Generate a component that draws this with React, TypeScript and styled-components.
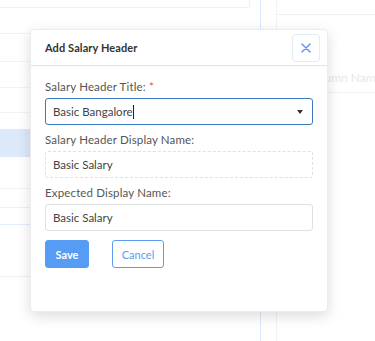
import React from "react";
import styled, { createGlobalStyle } from "styled-components";

const Global = createGlobalStyle`
  html, body { margin: 0; padding: 0; background: #fff; }
  body { font-family: Lato, "Open Sans", sans-serif; }
  * { box-sizing: border-box; }
`;

const Page = styled.div`
  position: relative;
  width: 375px;
  height: 341px;
  overflow: hidden;
  display: flex;
  background: #fff;
`;

const LeftCol = styled.div`
  width: 250px;
  flex-shrink: 0;
  display: flex;
  flex-direction: column;
`;

const CardEnd = styled.div`
  height: 8px;
  border-bottom: 1px solid #f0f0f0;
  border-right: 1px solid #f0f0f0;
  border-bottom-right-radius: 4px;
`;

const BgRow = styled.div<{ h: number }>`
  height: ${(p) => p.h}px;
  border-bottom: 1px solid #f3f3f3;
  display: flex;
  align-items: center;
  justify-content: flex-end;
  font-size: 12px;
  color: #e6e6e6;
  padding-right: 4px;
  font-family: Lato, sans-serif;
`;

const BlueBlock = styled.div`
  height: 28px;
  margin-top: 16px;
  margin-bottom: 6px;
  background: #dce9fb;
  color: #fff;
  display: flex;
  align-items: center;
  justify-content: flex-end;
  font-size: 12px;
  padding-right: 2px;
`;

const BgBox = styled.div`
  margin-top: 18px;
  height: 70px;
  border: 1px solid #f0f0f0;
  border-left: none;
  border-radius: 0 4px 4px 0;
  display: flex;
  flex-direction: column;
`;

const BgBoxRow = styled.div`
  height: 17px;
  border-bottom: 1px solid #e3edfb;
`;

const BgCaret = styled.div`
  margin-left: auto;
  margin-right: 8px;
  margin-top: 36px;
  width: 0;
  height: 0;
  border-left: 4px solid transparent;
  border-right: 4px solid transparent;
  border-top: 4px solid #e2e2e2;
`;

const Gutter = styled.div`
  width: 26px;
  flex-shrink: 0;
  display: flex;
  padding-left: 10px;
`;

const VLine = styled.div<{ c: string }>`
  width: 1px;
  height: 100%;
  background: ${(p) => p.c};
`;

const RightCol = styled.div`
  flex: 1;
  min-width: 0;
  overflow: hidden;
  display: flex;
  flex-direction: column;
  border-left: 1px solid #f3f3f3;
`;

const RightLine = styled.div`
  height: 15px;
  border-bottom: 1px solid #efefef;
`;

const RightInput = styled.div`
  margin-top: 48px;
  height: 30px;
  border-bottom: 1px solid #f3f3f3;
  display: flex;
  align-items: center;
  padding-left: 30px;
  font-size: 12px;
  color: #e8e8e8;
  white-space: nowrap;
`;

const Modal = styled.div`
  position: absolute;
  left: 30px;
  top: 29px;
  width: 298px;
  height: 283px;
  background: #fff;
  border-radius: 4px;
  border: 1px solid #ececec;
  box-shadow: 0 4px 14px rgba(0, 0, 0, 0.14);
  display: flex;
  flex-direction: column;
`;

const Header = styled.div`
  height: 36px;
  border-bottom: 1px solid #e3e3e3;
  display: flex;
  align-items: center;
  justify-content: space-between;
  padding: 0 7px 0 14px;
`;

const Title = styled.h1`
  margin: 0;
  font-size: 11px;
  font-weight: 700;
  color: #333;
  letter-spacing: 0.1px;
`;

const CloseBtn = styled.button`
  width: 28px;
  height: 28px;
  border: 1px solid #e4ebf4;
  border-radius: 4px;
  background: #fff;
  display: flex;
  align-items: center;
  justify-content: center;
  padding: 0;
  margin-top: 1px;
`;

const Body = styled.div`
  padding: 14px 14px 0 14px;
  display: flex;
  flex-direction: column;
`;

const Label = styled.label`
  font-size: 11.5px;
  color: #555;
  line-height: 14px;
  margin-bottom: 4px;
  letter-spacing: 0.15px;
`;

const Req = styled.span`
  color: #e5534b;
`;

const Field = styled.div<{ variant?: "focus" | "dashed" | "plain" }>`
  height: 27px;
  border-radius: 3px;
  border: 1px ${(p) => (p.variant === "dashed" ? "dashed" : "solid")}
    ${(p) => (p.variant === "focus" ? "#3b78bf" : "#e0e0e0")};
  display: flex;
  align-items: center;
  padding: 0 7px;
  font-size: 11.5px;
  color: #444;
  margin-bottom: 8px;
`;

const Cursor = styled.span`
  display: inline-block;
  width: 1px;
  height: 14px;
  background: #222;
  vertical-align: middle;
`;

const Caret = styled.div`
  margin-left: auto;
  margin-right: 2px;
  width: 0;
  height: 0;
  border-left: 3.5px solid transparent;
  border-right: 3.5px solid transparent;
  border-top: 4px solid #333;
`;

const Actions = styled.div`
  display: flex;
  gap: 23px;
  margin-top: 1px;
`;

const Btn = styled.button<{ primary?: boolean }>`
  height: 28px;
  border-radius: 3px;
  font-family: Lato, sans-serif;
  font-size: 11px;
  padding: 0;
  width: ${(p) => (p.primary ? 44 : 52)}px;
  background: ${(p) => (p.primary ? "#569cf5" : "#fff")};
  color: ${(p) => (p.primary ? "#fff" : "#5b9bf0")};
  border: 1px solid ${(p) => (p.primary ? "#569cf5" : "#5b9bf0")};
  font-weight: ${(p) => (p.primary ? 700 : 400)};
`;

export default function App() {
  return (
    <>
      <Global />
      <Page>
        <LeftCol>
          <CardEnd />
          <BgRow h={26} />
          <BgRow h={28} />
          <BgRow h={26} />
          <BgRow h={25} />
          <BlueBlock>olumn</BlueBlock>
          <BgRow h={26}>ected</BgRow>
          <BgBox>
            <BgBoxRow />
            <BgCaret />
          </BgBox>
        </LeftCol>
        <Gutter>
          <VLine c="#dbe8fb" />
        </Gutter>
        <RightCol>
          <RightLine />
          <RightInput>Column Name</RightInput>
        </RightCol>
        <Modal>
          <Header>
            <Title>Add Salary Header</Title>
            <CloseBtn aria-label="close">
              <svg width="10" height="10" viewBox="0 0 10 10">
                <path d="M1 1L9 9M9 1L1 9" stroke="#5b9bf0" strokeWidth="1.5" strokeLinecap="round" />
              </svg>
            </CloseBtn>
          </Header>
          <Body>
            <Label>
              Salary Header Title: <Req>*</Req>
            </Label>
            <Field variant="focus">
              <span>Basic Bangalore</span>
              <Cursor />
              <Caret />
            </Field>
            <Label>Salary Header Display Name:</Label>
            <Field variant="dashed">Basic Salary</Field>
            <Label>Expected Display Name:</Label>
            <Field variant="plain">Basic Salary</Field>
            <Actions>
              <Btn primary>Save</Btn>
              <Btn>Cancel</Btn>
            </Actions>
          </Body>
        </Modal>
      </Page>
    </>
  );
}
